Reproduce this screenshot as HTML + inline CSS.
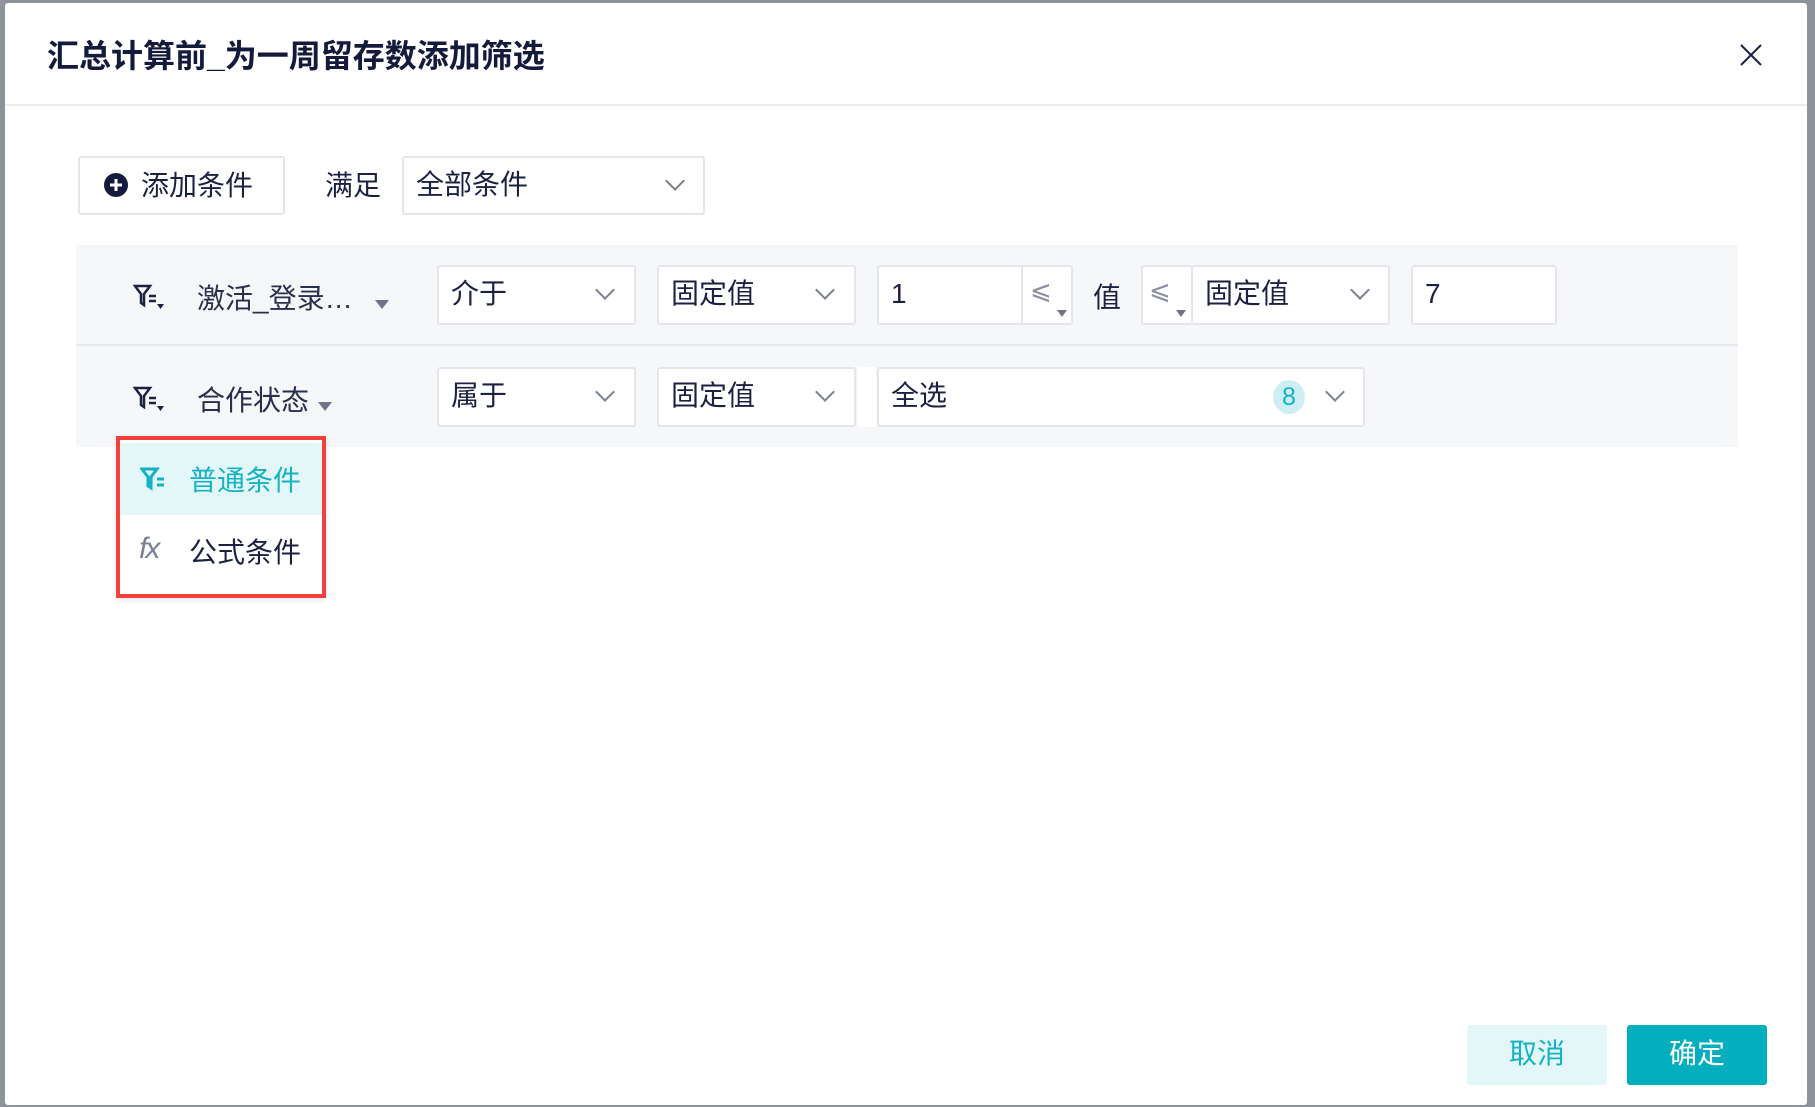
<!DOCTYPE html>
<html><head><meta charset="utf-8"><style>
*{box-sizing:border-box;margin:0;padding:0}
body{width:1815px;height:1107px;background:#8e929c;position:relative;overflow:hidden;font-family:"Liberation Sans","Noto Sans CJK SC",sans-serif;color:#1c2143}
.a{position:absolute}
.modal{left:5px;top:3px;width:1802px;height:1102px;background:#fff;border-radius:3px}
.box{position:absolute;background:#fff;border:2px solid #e4e6ec;border-radius:3px;font-size:28px;line-height:54px;padding-left:12px}
.chev{position:absolute;width:14px;height:14px;border-right:2px solid #7a7f92;border-bottom:2px solid #7a7f92;transform:rotate(45deg)}
.t{position:absolute;font-size:28px;white-space:nowrap}
.tri{position:absolute;width:0;height:0;border-left:7px solid transparent;border-right:7px solid transparent;border-top:9px solid #6e7388}
</style></head><body>
<div class="a modal"></div>
<div class="t" style="left:47px;top:31px;font-size:32px;font-weight:bold;color:#141a3b">汇总计算前_为一周留存数添加筛选</div>
<svg class="a" style="left:1739px;top:43px" width="24" height="24"><path d="M2 2L22 22M22 2L2 22" stroke="#1c2143" stroke-width="2"/></svg>
<div class="a" style="left:5px;top:104px;width:1802px;height:2px;background:#ebecf0"></div>

<div class="box" style="left:78px;top:156px;width:207px;height:59px"></div>
<svg class="a" style="left:103px;top:172px" width="26" height="26"><circle cx="13" cy="13" r="12" fill="#141a3b"/><path d="M13 7V19M7 13H19" stroke="#fff" stroke-width="3"/></svg>
<div class="t" style="left:141px;top:164px">添加条件</div>
<div class="t" style="left:325px;top:164px">满足</div>
<div class="box" style="left:402px;top:156px;width:303px;height:59px">全部条件</div>
<div class="chev" style="left:668px;top:174px"></div>

<div class="a" style="left:76px;top:245px;width:1662px;height:202px;background:#f6f7f9"></div>
<div class="a" style="left:76px;top:344px;width:1662px;height:2px;background:#e6e8ed"></div>

<!-- row1 -->
<svg class="a" style="left:133px;top:283px" width="40" height="28"><path d="M2 3H17L11 11V22L8 20V11Z" fill="none" stroke="#1c2143" stroke-width="2.5"/><path d="M16 13H23M16 18H23" stroke="#1c2143" stroke-width="2.5"/><path d="M24 21H31L27.5 26Z" fill="#1c2143"/></svg>
<div class="t" style="left:197px;top:277px;color:#2a2f4d">激活_登录…</div>
<div class="tri" style="left:375px;top:300px"></div>
<div class="box" style="left:437px;top:265px;width:199px;height:60px">介于</div>
<div class="chev" style="left:598px;top:283px"></div>
<div class="box" style="left:657px;top:265px;width:199px;height:60px">固定值</div>
<div class="chev" style="left:818px;top:283px"></div>
<div class="box" style="left:877px;top:265px;width:196px;height:60px">1</div>
<div class="a" style="left:1021px;top:267px;width:2px;height:56px;background:#e4e6ec"></div>
<div class="t" style="left:1030px;top:276px;color:#8a8ea0;font-size:26px;font-family:'DejaVu Sans',sans-serif">⩽</div>
<div class="tri" style="left:1057px;top:310px;border-left-width:5px;border-right-width:5px;border-top-width:7px"></div>
<div class="t" style="left:1093px;top:276px">值</div>
<div class="box" style="left:1141px;top:265px;width:52px;height:60px"></div>
<div class="t" style="left:1149px;top:276px;color:#8a8ea0;font-size:26px;font-family:'DejaVu Sans',sans-serif">⩽</div>
<div class="tri" style="left:1176px;top:310px;border-left-width:5px;border-right-width:5px;border-top-width:7px"></div>
<div class="box" style="left:1191px;top:265px;width:199px;height:60px">固定值</div>
<div class="chev" style="left:1353px;top:283px"></div>
<div class="box" style="left:1411px;top:265px;width:146px;height:60px">7</div>

<!-- row2 -->
<svg class="a" style="left:133px;top:385px" width="40" height="28"><path d="M2 3H17L11 11V22L8 20V11Z" fill="none" stroke="#1c2143" stroke-width="2.5"/><path d="M16 13H23M16 18H23" stroke="#1c2143" stroke-width="2.5"/><path d="M24 21H31L27.5 26Z" fill="#1c2143"/></svg>
<div class="t" style="left:197px;top:379px;color:#2a2f4d">合作状态</div>
<div class="tri" style="left:318px;top:402px"></div>
<div class="box" style="left:437px;top:367px;width:199px;height:60px">属于</div>
<div class="chev" style="left:598px;top:385px"></div>
<div class="box" style="left:657px;top:367px;width:199px;height:60px">固定值</div>
<div class="chev" style="left:818px;top:385px"></div>
<div class="a" style="left:858px;top:367px;width:18px;height:60px;background:#fff"></div>
<div class="box" style="left:877px;top:367px;width:488px;height:60px">全选</div>
<div class="a" style="left:1273px;top:380px;width:32px;height:34px;border-radius:50%;background:#cdeff3;color:#13b3c4;font-size:25px;text-align:center;line-height:34px">8</div>
<div class="chev" style="left:1328px;top:385px"></div>

<!-- popup -->
<div class="a" style="left:116px;top:436px;width:210px;height:162px;background:#fff;border:4px solid #f2403f;box-shadow:0 2px 6px rgba(0,0,0,.1)"></div>
<div class="a" style="left:120px;top:443px;width:202px;height:72px;background:#e3f6f8"></div>
<svg class="a" style="left:140px;top:466px" width="30" height="26"><path d="M2 3H17L11 11V22L8 20V11Z" fill="none" stroke="#13b3c4" stroke-width="3"/><path d="M17 13H24M17 19H24" stroke="#13b3c4" stroke-width="3"/></svg>
<div class="t" style="left:189px;top:459px;color:#13b3c4">普通条件</div>
<div class="t" style="left:139px;top:532px;color:#7a7f92;font-style:italic;font-family:'Liberation Sans',sans-serif;font-size:30px;letter-spacing:-2px">fx</div>
<div class="t" style="left:189px;top:531px">公式条件</div>

<!-- buttons -->
<div class="a" style="left:1467px;top:1025px;width:140px;height:60px;background:#e3f6f8;border-radius:3px;color:#13b3c4;font-size:28px;text-align:center;line-height:58px">取消</div>
<div class="a" style="left:1627px;top:1025px;width:140px;height:60px;background:#03aebe;border-radius:3px;color:#fff;font-size:28px;text-align:center;line-height:58px">确定</div>
</body></html>
